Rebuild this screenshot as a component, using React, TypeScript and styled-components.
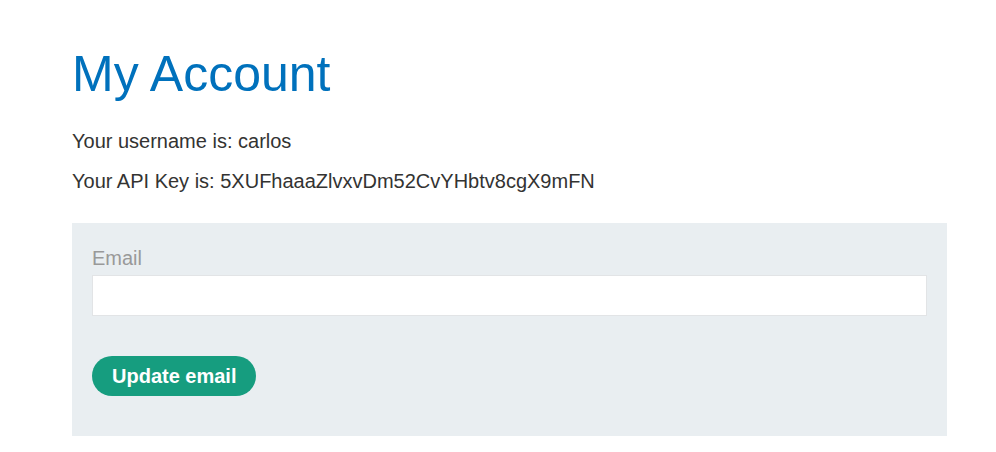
import React from "react";
import styled, { createGlobalStyle } from "styled-components";

const Global = createGlobalStyle`
  html, body { margin: 0; padding: 0; background: #fff; }
  body { font-family: "Liberation Sans", Arial, sans-serif; color: #333332; }
  * { box-sizing: border-box; }
`;

const Page = styled.main`
  padding: 44px 49px 16px 72px;
  display: flex;
  flex-direction: column;
`;

const Title = styled.h1`
  margin: 0;
  font-size: 50px;
  line-height: 60px;
  font-weight: 400;
  color: #0071bc;
`;

const Line = styled.p`
  margin: 0;
  font-size: 20px;
  line-height: 40px;
`;

const Info = styled.div`
  margin-top: 17px;
  display: flex;
  flex-direction: column;
`;

const Panel = styled.form`
  margin-top: 22px;
  background: #e9eef1;
  padding: 24px 20px 40px 20px;
  display: flex;
  flex-direction: column;
`;

const Label = styled.label`
  font-size: 20px;
  line-height: 22px;
  color: #999999;
  margin-bottom: 6px;
`;

const Input = styled.input`
  height: 41px;
  width: 100%;
  border: 1px solid #e2e4e6;
  background: #fff;
  font-size: 16px;
  padding: 0 8px;
  outline: none;
`;

const Button = styled.button`
  align-self: flex-start;
  margin-top: 40px;
  height: 40px;
  padding: 0 20px;
  border: none;
  border-radius: 20px;
  background: #169d7f;
  color: #fff;
  font-family: "Liberation Sans", Arial, sans-serif;
  font-weight: 700;
  font-size: 20px;
  cursor: pointer;
`;

export default function App() {
  return (
    <>
      <Global />
      <Page>
        <Title>My Account</Title>
        <Info>
          <Line>Your username is: carlos</Line>
          <Line>Your API Key is: 5XUFhaaaZlvxvDm52CvYHbtv8cgX9mFN</Line>
        </Info>
        <Panel onSubmit={(e) => e.preventDefault()}>
          <Label htmlFor="email">Email</Label>
          <Input id="email" type="email" name="email" />
          <Button type="submit">Update email</Button>
        </Panel>
      </Page>
    </>
  );
}
